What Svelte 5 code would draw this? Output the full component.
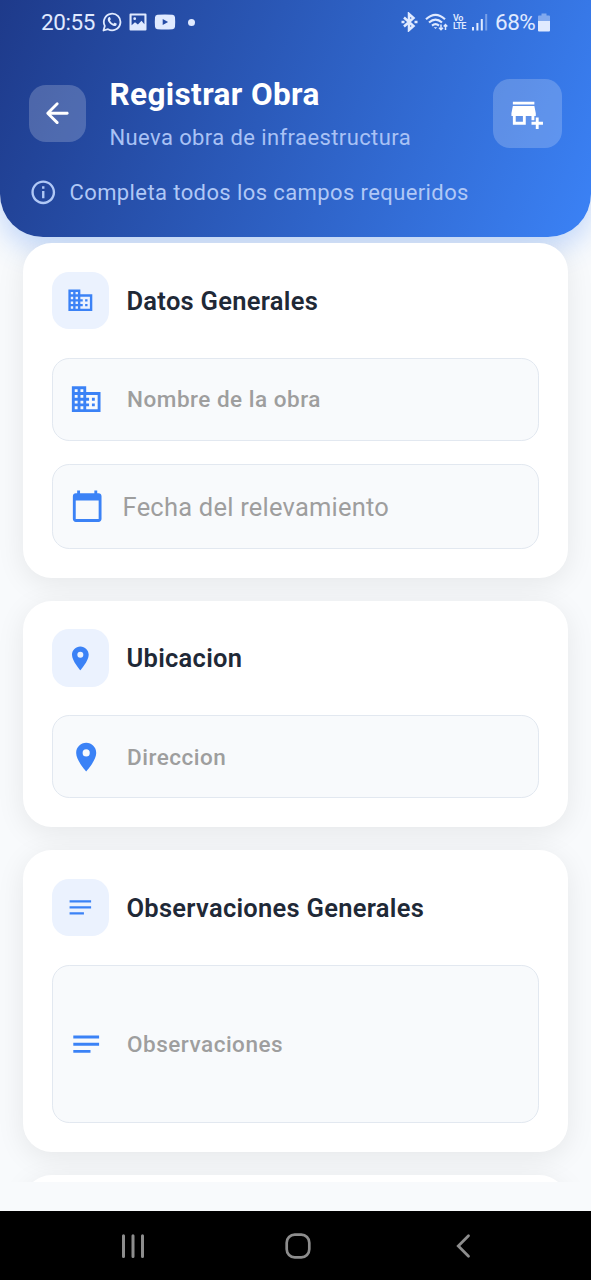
<script>
  const icons = {
    business:
      'M12 7V3H2v18h20V7H12zM6 19H4v-2h2v2zm0-4H4v-2h2v2zm0-4H4V9h2v2zm0-4H4V5h2v2zm4 12H8v-2h2v2zm0-4H8v-2h2v2zm0-4H8V9h2v2zm0-4H8V5h2v2zm10 12h-8v-2h2v-2h-2v-2h2v-2h-2V9h8v10zm-2-8h-2v2h2v-2zm0 4h-2v2h2v-2z',
    calendar:
      'M20 3h-1V1h-2v2H7V1H5v2H4c-1.1 0-2 .9-2 2v16c0 1.1.9 2 2 2h16c1.1 0 2-.9 2-2V5c0-1.1-.9-2-2-2zm0 18H4V8h16v13z',
    pin: 'M12 2C8.13 2 5 5.13 5 9c0 5.25 7 13 7 13s7-7.75 7-13c0-3.87-3.13-7-7-7zm0 9.5a2.5 2.5 0 0 1 0-5 2.5 2.5 0 0 1 0 5z',
    notes: 'M21 11.01L3 11v2h18zM3 16h12v2H3zM21 6H3v2.01L21 8z',
    back: 'M19 11H7.83l4.88-4.88c.39-.39.39-1.03 0-1.42a.996.996 0 0 0-1.41 0l-6.59 6.59c-.39.39-.39 1.02 0 1.41l6.59 6.59c.39.39 1.02.39 1.41 0 .39-.39.39-1.02 0-1.41L7.83 13H19c.55 0 1-.45 1-1s-.45-1-1-1z',
    store: 'M15 17h2v-3h1v-2l-1-5H2l-1 5v2h1v6h9v-6h4v3zm-6 1H4v-4h5v4zM2 4h15v2H2zM20 18v-3h-2v3h-3v2h3v3h2v-3h3v-2z',
    info: 'M11 7h2v2h-2zm0 4h2v6h-2zm1-9C6.48 2 2 6.48 2 12s4.48 10 10 10 10-4.48 10-10S17.52 2 12 2zm0 18c-4.41 0-8-3.59-8-8s3.59-8 8-8 8 3.59 8 8-3.59 8-8 8z'
  };

  const sections = [
    {
      title: 'Datos Generales',
      icon: 'business',
      kind: 'general',
      fields: [
        { label: 'Nombre de la obra', icon: 'business', kind: 'input' },
        { label: 'Fecha del relevamiento', icon: 'calendar', kind: 'date' }
      ]
    },
    {
      title: 'Ubicacion',
      icon: 'pin',
      kind: 'location',
      fields: [{ label: 'Direccion', icon: 'pin', kind: 'input' }]
    },
    {
      title: 'Observaciones Generales',
      icon: 'notes',
      kind: 'remarks',
      fields: [{ label: 'Observaciones', icon: 'notes', kind: 'area' }]
    }
  ];
</script>

{#snippet icon(name)}
  <svg class="icon" viewBox="0 0 24 24" aria-hidden="true"><path d={icons[name]} fill="currentColor" /></svg>
{/snippet}

<div class="screen">
  <header>
    <div class="status">
      <div class="status-left">
        <span class="clock">20:55</span>
        <svg class="whatsapp" width="20" height="20" viewBox="0 0 20 20">
          <path d="M1.5 18.5l1.3-4.6A8.3 8.3 0 1 1 6 17.2z" fill="none" stroke="currentColor" stroke-width="1.8" stroke-linejoin="round" />
          <path d="M6.9 5.3c.5-.4 1-.3 1.2.2l.7 1.6c.1.4-.6 1-.8 1.3.7 1.5 1.9 2.6 3.5 3.3.4-.3.8-1.2 1.3-1l1.7.9c.5.3.2 1.3-.3 1.8-3.1 2.3-9.4-3.3-8.3-6.8.1-.5.5-1 1-1.3z" fill="currentColor" />
        </svg>
        <svg class="gallery" width="18" height="18" viewBox="0 0 18 18">
          <path fill="currentColor" fill-rule="evenodd" d="M1.5.5h15a1 1 0 0 1 1 1v15a1 1 0 0 1-1 1h-15a1 1 0 0 1-1-1v-15a1 1 0 0 1 1-1zM2.6 2.6v9.6l3.4-3 2.9 2.3 3.6-3.8 2.9 3.5V2.6zM5.7 4.3a1.4 1.4 0 1 1 0 2.8 1.4 1.4 0 0 1 0-2.8z" />
        </svg>
        <svg class="video" width="22" height="16" viewBox="0 0 22 16">
          <path fill="currentColor" fill-rule="evenodd" d="M3.5.7Q11 .1 18.5.7q2.3.3 2.5 2.6.4 4.7 0 9.4-.2 2.3-2.5 2.6-7.5.6-15 0Q1.2 15 1 12.7.6 8 1 3.3 1.2 1 3.5.7zM8.7 4.9v6.2L14.1 8z" />
        </svg>
        <span class="dot"></span>
      </div>
      <div class="status-right">
        <svg width="18" height="20" viewBox="0 0 18 20" fill="none" stroke="currentColor" stroke-width="2.5">
          <path d="M4 5.5l9.5 8.5-4.5 4V2l4.5 4L4 14.5" />
          <path d="M1.5 10h3M14.5 10h3" />
        </svg>
        <svg class="wifi" width="24" height="20" viewBox="0 0 24 20" fill="none" stroke="currentColor" stroke-width="2.1">
          <path d="M1 7.3q9.500-9 19 0M4 10.6q6.500-6 13 0M7 13.6q3.500-3 7 0" />
          <path d="M8.7 15.3l1.8 1.7 1.8-1.7z" fill="currentColor" stroke="none" />
          <path d="M16 12.5v5M14 15.7l2 2 2-2M20.5 18v-5M18.7 14.5l1.8-2 1.8 2" stroke-width="1.5" />
        </svg>
        <span class="volte"><span>Vo</span><span>LTE</span></span>
        <svg class="signal" width="16" height="18" viewBox="0 0 16 18" fill="currentColor">
          <path d="M0 14h2v3.5H0zM4.4 10h2v7.5h-2zM8.8 6h2v11.5h-2z" />
          <path d="M13.2 1h2v16.5h-2z" opacity=".4" />
        </svg>
        <span class="percent">68%</span>
        <svg class="battery" width="12" height="19" viewBox="0 0 12 19" fill="currentColor">
          <path d="M3.5.5h5v2H11a1 1 0 0 1 1 1V8H0V3.5a1 1 0 0 1 1-1h2.5z" opacity=".45" />
          <path d="M0 8h12v9.5a1 1 0 0 1-1 1H1a1 1 0 0 1-1-1z" />
        </svg>
      </div>
    </div>

    <div class="bar">
      <button class="back" aria-label="Volver">{@render icon('back')}</button>
      <div class="heading">
        <h1>Registrar Obra</h1>
        <p>Nueva obra de infraestructura</p>
      </div>
      <button class="store" aria-label="Agregar obra">{@render icon('store')}</button>
    </div>

    <div class="notice">
      {@render icon('info')}
      <span>Completa todos los campos requeridos</span>
    </div>
  </header>

  <main>
    {#each sections as section}
      <section class="card {section.kind}">
        <div class="card-head">
          <div class="badge">{@render icon(section.icon)}</div>
          <h2>{section.title}</h2>
        </div>
        {#each section.fields as field}
          <div class="field {field.kind}">
            {@render icon(field.icon)}
            <span>{field.label}</span>
          </div>
        {/each}
      </section>
    {/each}
    <section class="card next"></section>
  </main>

  <div class="gap"></div>

  <nav>
    <svg width="24" height="26" viewBox="0 0 24 26" stroke="currentColor" stroke-width="3" stroke-linecap="round" fill="none">
      <path d="M2.5 2.8v20.8M12 2.8v20.8M21.5 2.8v20.8" />
    </svg>
    <svg width="26" height="26" viewBox="0 0 26 26" stroke="currentColor" stroke-width="2.7" fill="none">
      <rect x="1.7" y="1.7" width="22.6" height="22.6" rx="8" />
    </svg>
    <svg width="16" height="26" viewBox="0 0 16 26" stroke="currentColor" stroke-width="2.8" stroke-linecap="round" fill="none">
      <path d="M13.5 2.8L3.3 13l10.2 10.2" />
    </svg>
  </nav>
</div>

<style>
  :global(body) {
    margin: 0;
    background: #f8fafc;
  }
  * {
    box-sizing: border-box;
  }
  .screen {
    width: 591px;
    height: 1280px;
    display: flex;
    flex-direction: column;
    overflow: hidden;
    background: #f8fafc;
    font-family: Roboto, sans-serif;
  }
  .icon {
    display: block;
    flex: none;
    width: 34.4px;
    height: 34.4px;
  }
  h1, h2, p {
    margin: 0;
    white-space: nowrap;
  }
  button {
    border: 0;
    padding: 0;
    color: #fff;
    display: flex;
    align-items: center;
    justify-content: center;
    flex: none;
  }
  header {
    flex: none;
    height: 237px;
    border-radius: 0 0 43px 43px;
    background: linear-gradient(111.85deg, #1e3a8a, #3b82f6);
    box-shadow: 0 11px 29px rgba(59, 130, 246, 0.3);
  }
  .status {
    height: 44px;
    padding: 0 41px;
    display: flex;
    align-items: center;
    justify-content: space-between;
    color: #e0eaff;
    font-size: 22.5px;
  }
  .status-left, .status-right {
    display: flex;
    align-items: center;
  }
  .status svg {
    flex: none;
  }
  .clock {
    letter-spacing: -0.4px;
    width: 61px;
  }
  .gallery {
    margin-left: 7px;
  }
  .video {
    margin-left: 7px;
  }
  .dot {
    width: 7px;
    height: 7px;
    border-radius: 50%;
    background: currentColor;
    margin-left: 12px;
  }
  .wifi {
    margin-left: 7px;
  }
  .volte {
    display: flex;
    flex-direction: column;
    font-size: 9px;
    font-weight: 600;
    line-height: 8.5px;
    letter-spacing: -0.5px;
    margin-left: 4px;
    width: 19px;
  }
  .signal {
    margin-right: 7px;
  }
  .percent {
    width: 43px;
    letter-spacing: -0.5px;
  }
  .bar {
    display: flex;
    align-items: center;
    padding: 0 29px;
    margin-top: 28px;
    height: 82px;
  }
  .back {
    width: 57px;
    height: 57px;
    border-radius: 17px;
    background: rgba(255, 255, 255, 0.2);
  }
  .store {
    width: 69px;
    height: 69px;
    border-radius: 17px;
    background: rgba(255, 255, 255, 0.2);
  }
  .heading {
    flex: 1;
    padding: 5px 0 0 23.5px;
  }
  h1 {
    font-size: 31.5px;
    line-height: 40px;
    font-weight: 700;
    color: #fff;
    letter-spacing: 0.38px;
  }
  p {
    margin-top: 5px;
    font-size: 22px;
    line-height: 36px;
    color: #a9c2f5;
    letter-spacing: 0.4px;
  }
  .notice {
    margin-top: 24px;
    padding-left: 29px;
    display: flex;
    align-items: center;
    gap: 12px;
    height: 28px;
    font-size: 22px;
    color: #b0c8f6;
    letter-spacing: 0.4px;
    white-space: nowrap;
  }
  .notice .icon {
    width: 28.5px;
    height: 28.5px;
  }
  main {
    flex: none;
    height: 945px;
    padding: 6px 23px 0;
    display: flex;
    flex-direction: column;
    gap: 23px;
    clip-path: inset(0);
  }
  .card {
    flex: none;
    background: #fff;
    border-radius: 28.7px;
    padding: 28.7px;
    box-shadow: 0 6px 29px rgba(0, 0, 0, 0.08);
  }
  .general { height: 334.6px; }
  .location { height: 226.8px; }
  .remarks { height: 301.3px; }
  .next { height: 120px; }
  .card-head {
    display: flex;
    align-items: center;
    gap: 17.5px;
    height: 57.4px;
    margin-bottom: 28.7px;
  }
  .badge {
    width: 57.3px;
    height: 57.3px;
    border-radius: 17px;
    background: #ebf2fe;
    color: #3b82f6;
    display: flex;
    align-items: center;
    justify-content: center;
  }
  .badge .icon {
    width: 28.7px;
    height: 28.7px;
  }
  h2 {
    font-size: 25.5px;
    font-weight: 600;
    color: #1f2937;
    letter-spacing: 0.28px;
    padding-top: 1px;
  }
  .field {
    display: flex;
    align-items: center;
    height: 83px;
    border: 1.5px solid #e2e8f0;
    border-radius: 17.2px;
    background: #f8fafc;
    padding-left: 16.5px;
    gap: 23.5px;
    color: #3b82f6;
  }
  .field span {
    font-size: 22.5px;
    font-weight: 500;
    color: #9e9e9e;
    letter-spacing: 0.5px;
  }
  .field.date {
    margin-top: 23px;
    height: 85px;
    padding-left: 17.5px;
    gap: 18px;
  }
  .field.date span {
    font-size: 25.5px;
    font-weight: 400;
    letter-spacing: 0.22px;
    padding-top: 1px;
  }
  .field.area {
    height: 158px;
  }
  .gap {
    flex: none;
    height: 29px;
  }
  nav {
    flex: none;
    height: 69px;
    background: #000;
    color: #8d8d8d;
    display: grid;
    grid-template-columns: 164px 170px 16px;
    align-items: center;
    padding: 1px 0 0 121px;
  }
</style>
